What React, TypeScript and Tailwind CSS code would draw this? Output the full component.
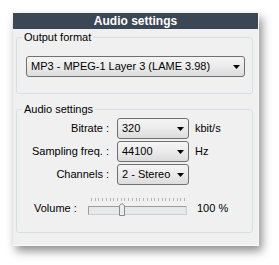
import React from "react";

const font = { fontFamily: '"Liberation Sans", Arial, sans-serif' };

// Win7-ish combo box
const Combo = ({ value, className }: { value: string; className: string }) => (
  <div
    className={`flex h-[21px] items-center justify-between rounded-[3px] border border-[#707070] bg-gradient-to-b from-[#f4f4f4] via-[#ebebeb] to-[#dcdcdc] pl-[4px] pr-[4px] text-[11px] text-black ${className}`}
  >
    <span className="leading-none">{value}</span>
    <svg width="7" height="4" viewBox="0 0 7 4">
      <path d="M0 0 H7 L3.5 4 Z" fill="#000" />
    </svg>
  </div>
);

const Row = ({ label, value, unit }: { label: string; value: string; unit: string }) => (
  <div className="flex items-center">
    <div className="w-[93px] pr-[1px] text-right text-[11px] text-black">{label}</div>
    <Combo value={value} className="ml-[7px] w-[72px]" />
    <div className="ml-[6px] text-[11px] text-black">{unit}</div>
  </div>
);

const Slider = () => {
  const ticks = Array.from({ length: 26 }, (_, i) => 3 + i * 3.72);
  return (
    <svg width="100" height="19" viewBox="0 0 100 19">
      {ticks.map((x, i) => (
        <rect key={i} x={Math.round(x)} y="0" width="1" height="3" fill="#b4b4b4" />
      ))}
      <rect x="0.5" y="8.5" width="98" height="8" fill="#e6e9e9" stroke="#cfcfcf" />
      <line x1="0.5" y1="8.5" x2="98.5" y2="8.5" stroke="#9c9c9c" />
      <line x1="0.5" y1="8.5" x2="0.5" y2="16.5" stroke="#9c9c9c" />
      <path d="M31.5 7.5 L34 5.5 L36.5 7.5 V17.5 H31.5 Z" fill="#ececec" stroke="#8a8a8a" />
    </svg>
  );
};

export default function App() {
  return (
    <div className="h-[265px] w-[279px] bg-white pl-[13px] pt-[13px]" style={font}>
      <div className="flex h-[233px] w-[246px] flex-col border-r border-b border-[#fafafa] bg-[#f0f0f0] shadow-[3px_5px_9px_rgba(0,0,0,0.45)]">
        <div className="flex h-[16px] items-center justify-center bg-[#3b4754] text-[12px] font-bold text-white">
          Audio settings
        </div>
        <div className="flex flex-col pl-[3px] pr-[5px]">
          <fieldset className="mt-[2px] rounded-[3px] border border-[#d5dfe5] pb-[16px]">
            <legend className="ml-[5px] px-[2px] text-[11px] leading-[13px] text-black">Output format</legend>
            <Combo value="MP3 - MPEG-1 Layer 3 (LAME 3.98)" className="ml-[9px] mr-[7px] mt-[12px]" />
          </fieldset>
          <fieldset className="mt-[9px] flex flex-col rounded-[3px] border border-[#d5dfe5] pb-[15px]">
            <legend className="ml-[5px] px-[2px] text-[11px] leading-[13px] text-black">Audio settings</legend>
            <div className="mt-[2px] flex flex-col gap-[2px]">
              <Row label="Bitrate :" value="320" unit="kbit/s" />
              <Row label="Sampling freq. :" value="44100" unit="Hz" />
              <Row label="Channels :" value="2 - Stereo" unit="" />
            </div>
            <div className="mt-[13px] flex items-end">
              <div className="mb-[1px] w-[71px] shrink-0 whitespace-nowrap pl-[17px] text-[11px] text-black">Volume :</div>
              <Slider />
              <div className="mb-[1px] ml-[9px] whitespace-nowrap text-[11px] text-black">100 %</div>
            </div>
          </fieldset>
        </div>
      </div>
    </div>
  );
}
